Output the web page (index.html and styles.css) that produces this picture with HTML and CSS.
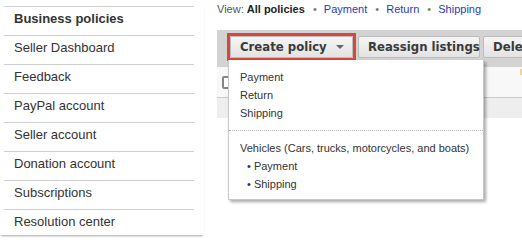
FILE: index.html
```html
<!DOCTYPE html>
<html>
<head>
<meta charset="utf-8">
<link rel="stylesheet" href="styles.css">
</head>
<body>
<div class="page">
  <nav class="side">
    <ul class="menu">
      <li class="item active">Business policies</li>
      <li class="item">Seller Dashboard</li>
      <li class="item">Feedback</li>
      <li class="item">PayPal account</li>
      <li class="item">Seller account</li>
      <li class="item">Donation account</li>
      <li class="item">Subscriptions</li>
      <li class="item">Resolution center</li>
    </ul>
  </nav>
  <main class="main">
    <div class="view">
      <span class="view-label">View:</span>
      <b class="view-current">All policies</b>
      <span class="dot">•</span>
      <a class="link">Payment</a>
      <span class="dot">•</span>
      <a class="link">Return</a>
      <span class="dot">•</span>
      <a class="link">Shipping</a>
    </div>
    <div class="toolbar">
      <span class="highlight"><button class="btn btn-create">Create policy<span class="caret"></span></button></span>
      <button class="btn btn-reassign">Reassign listings</button>
      <button class="btn btn-delete">Delete</button>
      <div class="dropdown">
        <ul class="dd-group">
          <li>Payment</li>
          <li>Return</li>
          <li>Shipping</li>
        </ul>
        <div class="dd-sep"></div>
        <ul class="dd-group">
          <li>Vehicles (Cars, trucks, motorcycles, and boats)</li>
          <li class="sub">• Payment</li>
          <li class="sub">• Shipping</li>
        </ul>
      </div>
    </div>
    <div class="row">
      <span class="check"></span>
      <span class="flag"></span>
    </div>
    <div class="strip"></div>
  </main>
</div>
</body>
</html>
```
FILE: styles.css
```css
* { box-sizing: border-box; }
html, body { margin: 0; padding: 0; background: #fff; }
body {
  font-family: "Liberation Sans", Arial, sans-serif;
  color: #333;
  width: 522px;
  height: 249px;
  overflow: hidden;
}
.page { display: flex; align-items: flex-start; }

.side {
  width: 204px;
  height: 235px;
  padding-top: 6px;
  overflow: hidden;
  flex: none;
  box-shadow: 0 2px 2px -1px rgba(0,0,0,0.35);
}
.menu {
  list-style: none;
  margin: 0 10px 0 4px;
  padding: 0;
}
.item {
  border-top: 1px solid #cfcfcf;
  padding: 4px 0 9px 10px;
  line-height: 15px;
  font-size: 13px;
  color: #333;
}
.item.active { font-weight: bold; }

.main {
  margin-left: 13px;
  width: 305px;
  flex: none;
}
.view {
  height: 18px;
  line-height: 18px;
  font-size: 11px;
  white-space: nowrap;
  margin-bottom: 12px;
}
.view-label { color: #555; }
.view-current { color: #222; }
.dot { color: #777; margin: 0 4px 0 5px; }
.link { color: #1f3bb8; }

.toolbar {
  position: relative;
  height: 37px;
  background: #d3d3d3;
  display: flex;
  align-items: flex-start;
  padding: 6px 0 0 13px;
  white-space: nowrap;
  overflow: visible;
}
.highlight {
  display: flex;
  outline: 3px solid #d9463a;
}
.btn {
  font-family: "DejaVu Sans Condensed", "DejaVu Sans", sans-serif;
  font-weight: bold;
  font-size: 13px;
  color: #3a3a3a;
  height: 22px;
  line-height: 20px;
  padding: 0 9px;
  border: 1px solid #bcbcbc;
  border-radius: 2px;
  background: linear-gradient(#f5f5f5, #e3e3e3);
  display: flex;
  align-items: center;
  margin: 0;
  flex: none;
}
.btn-create { width: 123px; padding-right: 8px; }
.caret {
  width: 0; height: 0;
  margin-left: auto;
  border-left: 4px solid transparent;
  border-right: 4px solid transparent;
  border-top: 4px solid #666;
}
.btn-reassign { margin-left: 5px; width: 122px; }
.btn-delete { margin-left: 3px; }

.dropdown {
  position: absolute;
  left: 11px;
  top: 30px;
  width: 256px;
  height: 140px;
  background: #fff;
  border: 1px solid #c8c8c8;
  border-top: none;
  box-shadow: 2px 2px 3px rgba(0,0,0,0.35);
  z-index: 5;
}
.dd-group {
  list-style: none;
  margin: 0;
  padding: 8px 0 0 11px;
  font-size: 11px;
  line-height: 18px;
  color: #333;
}
.dd-sep {
  margin-top: 8px;
  border-top: 1px dotted #b5b5b5;
}
.dd-group .sub { padding-left: 7px; }

.row {
  height: 31px;
  background: #f8f8f8;
  border-bottom: 1px solid #cacaca;
  display: flex;
  align-items: flex-start;
  padding-left: 5px;
}
.check {
  width: 12px;
  height: 13px;
  margin-top: 9px;
  border: 2px solid #858585;
  border-radius: 2px;
  background: #fff;
}
.flag {
  margin-left: auto;
  margin-top: 2px;
  width: 2px;
  height: 6px;
  background: #f2d48a;
}
.strip {
  height: 20px;
  background: #eeeeee;
}
```
